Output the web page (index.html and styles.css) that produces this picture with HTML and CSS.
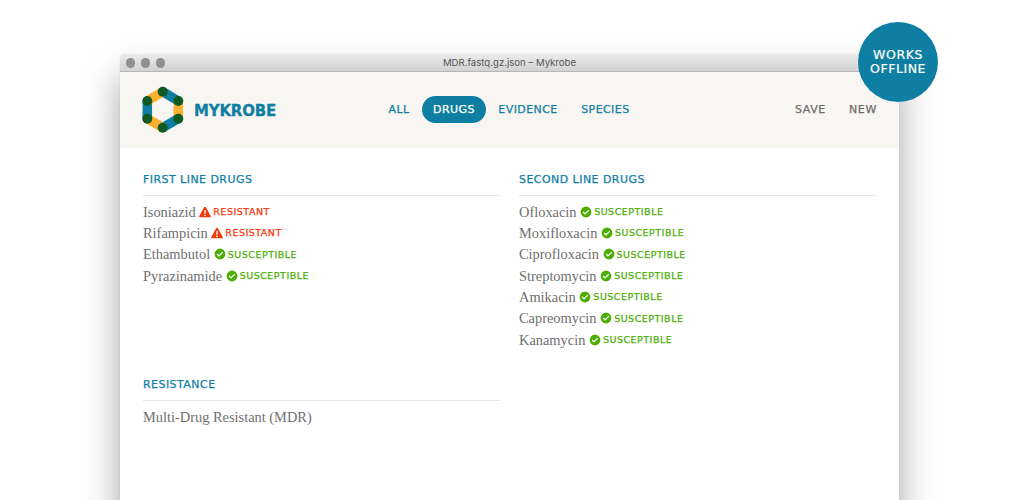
FILE: index.html
```html
<!DOCTYPE html>
<html lang="en">
<head>
<meta charset="utf-8">
<title>Mykrobe</title>
<link rel="stylesheet" href="styles.css">
</head>
<body>
<div class="stage">
  <div class="window">
    <div class="titlebar">
      <div class="lights"><i class="light"></i><i class="light"></i><i class="light"></i></div>
      <div class="title">MDR.fastq.gz.json – Mykrobe</div>
    </div>
    <header class="header">
      <div class="brand">
        <svg class="logo" width="42" height="46" viewBox="0 0 42 46">
          <g fill="none" stroke-width="9.500" stroke-linecap="butt">
            <path d="M20.700 4.700 L36.300 14" stroke="#0f7ea3"/>
            <path d="M36.300 14 L36.300 31.700" stroke="#fbb02e"/>
            <path d="M36.300 31.700 L20.700 40.700" stroke="#0f7ea3"/>
            <path d="M20.700 40.700 L5.300 31.700" stroke="#fbb02e"/>
            <path d="M5.300 31.700 L5.300 14" stroke="#0f7ea3"/>
            <path d="M5.300 14 L20.700 4.700" stroke="#fbb02e"/>
          </g>
          <g fill="#0f5a23">
            <circle cx="20.700" cy="4.700" r="5"/><circle cx="36.300" cy="14" r="5"/><circle cx="36.300" cy="31.700" r="5"/>
            <circle cx="20.700" cy="40.700" r="5"/><circle cx="5.300" cy="31.700" r="5"/><circle cx="5.300" cy="14" r="5"/>
          </g>
        </svg>
        <span class="wordmark">MYKROBE</span>
      </div>
      <nav class="nav">
        <a class="tab">ALL</a>
        <a class="tab active">DRUGS</a>
        <a class="tab">EVIDENCE</a>
        <a class="tab">SPECIES</a>
      </nav>
      <div class="actions">
        <a class="action">SAVE</a>
        <a class="action">NEW</a>
      </div>
    </header>
    <main class="content">
      <div class="column">
        <section class="group first">
          <h2 class="heading">FIRST LINE DRUGS</h2>
          <ul class="list">
            <li class="row">Isoniazid <span class="status resistant"><svg class="icon" viewBox="0 0 12 12"><use href="#warn"/></svg>RESISTANT</span></li>
            <li class="row">Rifampicin <span class="status resistant"><svg class="icon" viewBox="0 0 12 12"><use href="#warn"/></svg>RESISTANT</span></li>
            <li class="row">Ethambutol <span class="status susceptible"><svg class="icon" viewBox="0 0 12 12"><use href="#ok"/></svg>SUSCEPTIBLE</span></li>
            <li class="row">Pyrazinamide <span class="status susceptible"><svg class="icon" viewBox="0 0 12 12"><use href="#ok"/></svg>SUSCEPTIBLE</span></li>
          </ul>
        </section>
        <section class="group">
          <h2 class="heading">RESISTANCE</h2>
          <ul class="list">
            <li class="row">Multi-Drug Resistant (MDR)</li>
          </ul>
        </section>
      </div>
      <div class="column">
        <section class="group">
          <h2 class="heading">SECOND LINE DRUGS</h2>
          <ul class="list">
            <li class="row">Ofloxacin <span class="status susceptible"><svg class="icon" viewBox="0 0 12 12"><use href="#ok"/></svg>SUSCEPTIBLE</span></li>
            <li class="row">Moxifloxacin <span class="status susceptible"><svg class="icon" viewBox="0 0 12 12"><use href="#ok"/></svg>SUSCEPTIBLE</span></li>
            <li class="row">Ciprofloxacin <span class="status susceptible"><svg class="icon" viewBox="0 0 12 12"><use href="#ok"/></svg>SUSCEPTIBLE</span></li>
            <li class="row">Streptomycin <span class="status susceptible"><svg class="icon" viewBox="0 0 12 12"><use href="#ok"/></svg>SUSCEPTIBLE</span></li>
            <li class="row">Amikacin <span class="status susceptible"><svg class="icon" viewBox="0 0 12 12"><use href="#ok"/></svg>SUSCEPTIBLE</span></li>
            <li class="row">Capreomycin <span class="status susceptible"><svg class="icon" viewBox="0 0 12 12"><use href="#ok"/></svg>SUSCEPTIBLE</span></li>
            <li class="row">Kanamycin <span class="status susceptible"><svg class="icon" viewBox="0 0 12 12"><use href="#ok"/></svg>SUSCEPTIBLE</span></li>
          </ul>
        </section>
      </div>
    </main>
  </div>
  <div class="badge">WORKS<br>OFFLINE</div>
</div>
<svg class="defs" width="0" height="0">
  <symbol id="warn" viewBox="0 0 12 12">
    <path fill-rule="evenodd" fill="currentColor" d="M6 .8c.4 0 .7.2.9.5l4.800 8.600c.4.7-.1 1.400-.9 1.400H1.200c-.8 0-1.300-.7-.9-1.400L5.100 1.300c.2-.3.500-.5.900-.5zM5.200 4l.2 3.700h1.200L6.800 4zM6 8.400a.9.9 0 1 0 0 1.800a.9.9 0 0 0 0-1.800z"/>
  </symbol>
  <symbol id="ok" viewBox="0 0 12 12">
    <path fill-rule="evenodd" fill="currentColor" d="M6 .6a5.400 5.400 0 1 1 0 10.800a5.400 5.400 0 0 1 0-10.800zM9.300 4.600l-.9-.9L5 7 3.600 5.600l-.9.9L5 8.800z"/>
  </symbol>
</svg>
</body>
</html>
```
FILE: styles.css
```css
* { box-sizing: border-box; }
html, body { margin: 0; padding: 0; background: #fff; }
.stage { position: relative; width: 1020px; height: 500px; overflow: hidden; padding: 54px 0 0 120px; }
.defs { position: absolute; }
.window {
  width: 779px; height: 520px; background: #fff; border-radius: 5px 5px 0 0;
  box-shadow: 0 22px 36px rgba(0,0,0,.36), 0 0 1px rgba(0,0,0,.2);
  display: flex; flex-direction: column;
}
.titlebar {
  position: relative; height: 18px; flex: none; border-radius: 5px 5px 0 0;
  background: linear-gradient(#ebebeb, #d2d2d2);
  border-bottom: 1px solid #b6b6b6;
  display: flex; align-items: center; justify-content: center;
}
.lights { position: absolute; left: 5.500px; top: 4px; display: flex; gap: 5.500px; }
.light { display: block; width: 9.500px; height: 9.500px; border-radius: 50%; background: #908f93; }
.title { font: 9.600px/1 "Inter", "Liberation Sans", sans-serif; color: #555; }
.header {
  height: 76px; flex: none; background: #f7f6f2; display: flex; align-items: center;
  padding: 0 22px 0 22px; position: relative; font-family: "DejaVu Sans", sans-serif;
}
.brand { display: flex; align-items: center; gap: 10px; width: 236px; }
.logo { display: block; overflow: visible; }
.wordmark { font: 700 15px/1 "DejaVu Sans", sans-serif; color: #0f7ea3; letter-spacing: -.2px; -webkit-text-stroke: .3px #0f7ea3; margin-top: 3px; }
.nav { display: flex; align-items: center; gap: .5px; margin-top: -1px; margin-left: -1px; }
.tab { font-size: 11px; line-height: 27px; height: 27px; padding: 0 11.500px; border-radius: 14px; color: #0f7ea3; letter-spacing: .42px; -webkit-text-stroke: .25px currentColor; }
.tab.active { background: #0f7ea3; color: #fff; }
.actions { margin-left: auto; display: flex; gap: 23px; margin-top: -1px; }
.action { font-size: 11px; color: #6f6c68; letter-spacing: .65px; -webkit-text-stroke: .25px currentColor; }
.content { display: flex; gap: 19px; padding: 0 23px; flex: 1; }
.column { width: 357px; flex: none; }
.group { padding-top: 24px; }
.group.first { height: 205px; }
.heading { margin: 0; font: 400 11px/16px "DejaVu Sans", sans-serif; color: #0f7ea3; letter-spacing: .45px; -webkit-text-stroke: .25px currentColor; padding-bottom: 7px; border-bottom: 1px solid #e6e6e6; }
.list { list-style: none; margin: 5.800px 0 0; padding: 0; }
.row { font: 14.400px/21.300px "Liberation Serif", serif; color: #707070; white-space: nowrap; }
.status { font: 400 9.500px/1 "DejaVu Sans", sans-serif; letter-spacing: .5px; -webkit-text-stroke: .25px currentColor; display: inline-flex; align-items: center; gap: 2px; vertical-align: -1px; }
.icon { width: 12px; height: 12px; display: block; }
.resistant { color: #f5380a; }
.susceptible { color: #4cae04; }
.badge {
  position: absolute; left: 858px; top: 22px; width: 80px; height: 80px; border-radius: 50%;
  background: #0f7ea3; color: #fff; display: flex; align-items: center; justify-content: center; text-align: center;
  font: 400 12.500px/14px "DejaVu Sans", sans-serif; letter-spacing: .55px; -webkit-text-stroke: .2px currentColor;
}
```
